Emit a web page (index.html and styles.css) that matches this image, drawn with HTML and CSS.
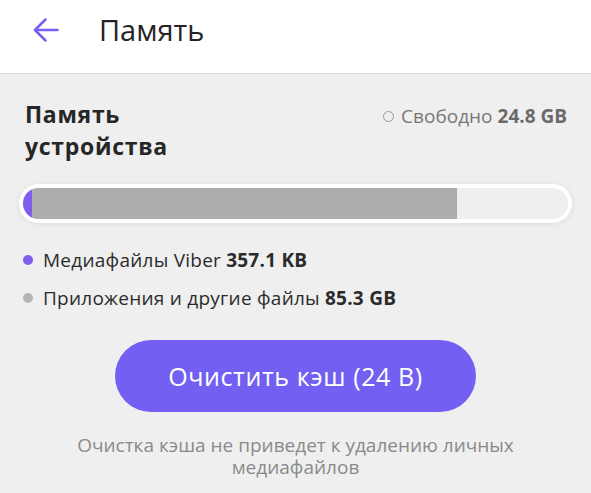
FILE: index.html
```html
<!DOCTYPE html>
<html lang="ru">
<head>
    <meta charset="UTF-8">
    <meta name="viewport" content="width=device-width, initial-scale=1.0">
    <title>Память</title>
    <link rel="stylesheet" href="styles.css">
</head>
<body>
    <header class="top-bar">
        <button class="back-btn" aria-label="Назад">
            <svg width="26" height="26" viewBox="0 0 26 26" fill="none" stroke="#7360F2" stroke-width="2.5" stroke-linecap="round" stroke-linejoin="round">
                <path d="M24.5 13H2"/>
                <path d="M12.5 2.5L2 13l10.5 10.5"/>
            </svg>
        </button>
        <h1>Память</h1>
    </header>
    <main class="storage">
        <div class="storage-head">
            <h2>Память<br>устройства</h2>
            <div class="free"><span class="ring"></span>Свободно <b>24.8 GB</b></div>
        </div>
        <div class="bar">
            <div class="bar-track">
                <div class="seg seg-viber"></div>
                <div class="seg seg-other"></div>
            </div>
        </div>
        <ul class="legend">
            <li><span class="dot dot-viber"></span>Медиафайлы Viber <b>357.1 KB</b></li>
            <li><span class="dot dot-other"></span>Приложения и другие файлы <b>85.3 GB</b></li>
        </ul>
        <div class="actions">
            <button class="clear-btn">Очистить кэш (24 В)</button>
            <p class="note">Очистка кэша не приведет к удалению личных медиафайлов</p>
        </div>
    </main>
</body>
</html>
```

FILE: styles.css
```css
* {
    box-sizing: border-box;
}
body {
    margin: 0;
    background: #efefef;
    color: #222;
    font-family: 'Open Sans', sans-serif;
    height: 493px;
    overflow: hidden;
}
.top-bar {
    height: 74px;
    background: #fff;
    border-bottom: 1px solid #dcdcdc;
    display: flex;
    align-items: center;
    padding: 0 0 14px 33px;
}
.back-btn {
    background: none;
    border: none;
    padding: 0;
    width: 26px;
    height: 26px;
    display: flex;
    cursor: pointer;
}
.top-bar h1 {
    margin: 0 0 0 40px;
    font-size: 29px;
    font-weight: 500;
    color: #242424;
}
.storage {
    padding: 24px 19px 0 19px;
}
.storage-head {
    display: flex;
    justify-content: space-between;
    align-items: flex-start;
    padding: 0 5px 0 6px;
}
.storage-head h2 {
    margin: 0;
    font-size: 23px;
    line-height: 32px;
    font-weight: 700;
    color: #262626;
    letter-spacing: 0.7px;
}
.free {
    font-size: 19px;
    line-height: 26px;
    color: #777;
    margin-top: 5px;
    display: flex;
    align-items: center;
}
.free b {
    margin-left: 5px;
    font-weight: 700;
    color: #6a6a6a;
}
.ring {
    width: 11px;
    height: 11px;
    border: 1.5px solid #9a9a9a;
    border-radius: 50%;
    margin-right: 7px;
}
.bar {
    margin-top: 22px;
    background: #fff;
    border-radius: 20px;
    padding: 4px;
    box-shadow: 0 1px 6px rgba(0,0,0,0.08);
    height: 39px;
}
.bar-track {
    height: 100%;
    border-radius: 16px;
    background: #efefef;
    display: flex;
    overflow: hidden;
}
.seg-viber {
    width: 9px;
    background: #7d5ff0;
}
.seg-other {
    width: 425px;
    background: #adadad;
}
.legend {
    list-style: none;
    margin: 18px 0 0;
    padding: 0 0 0 4px;
    font-size: 19px;
    color: #2b2b2b;
    letter-spacing: 0.25px;
}
.legend li {
    display: flex;
    align-items: center;
    height: 38px;
}
.legend b {
    margin-left: 5px;
    font-weight: 700;
}
.dot {
    width: 10px;
    height: 10px;
    border-radius: 50%;
    margin-right: 10px;
}
.dot-viber {
    background: #7d5ff0;
}
.dot-other {
    background: #b5b5b5;
}
.actions {
    display: flex;
    flex-direction: column;
    align-items: center;
    margin-top: 23px;
}
.clear-btn {
    width: 361px;
    height: 72px;
    border: none;
    border-radius: 36px;
    background: #7360f2;
    color: #fff;
    font-family: 'Open Sans', sans-serif;
    font-size: 25px;
    font-weight: 500;
    letter-spacing: 0.6px;
    cursor: pointer;
}
.note {
    margin: 22px 0 0;
    width: 470px;
    text-align: center;
    font-size: 19px;
    line-height: 22px;
    color: #8a8a8a;
}
```
